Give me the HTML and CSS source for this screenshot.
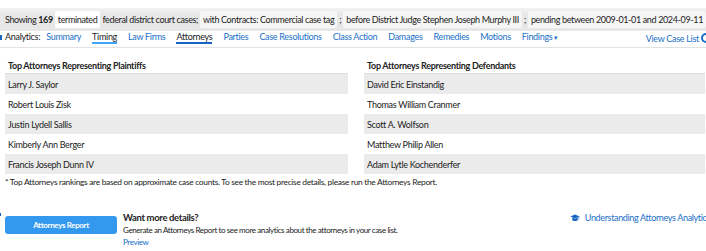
FILE: index.html
```html
<!DOCTYPE html>
<html>
<head>
  <title>Attorneys Analytics</title>
  <meta name="viewport" content="width=device-width, initial-scale=1.0">
  <link rel="stylesheet" href="styles.css">
</head>
<body>
  <div class="filters">
    <span>Showing <b>169</b></span>
    <span class="chip chip-white">terminated</span>
    <span>federal district court cases;</span>
    <span class="chip">with Contracts: Commercial case tag</span>
    <span>;</span>
    <span class="chip">before District Judge Stephen Joseph Murphy III</span>
    <span>;</span>
    <span class="chip">pending between 2009-01-01 and 2024-09-11</span>
    <span>.</span>
  </div>

  <div class="tabs">
    <span class="edge"></span>
    <span class="label">Analytics:</span>
    <a class="tab">Summary</a>
    <a class="tab current light">Timing</a>
    <a class="tab">Law Firms</a>
    <a class="tab current">Attorneys</a>
    <a class="tab">Parties</a>
    <a class="tab">Case Resolutions</a>
    <a class="tab">Class Action</a>
    <a class="tab">Damages</a>
    <a class="tab">Remedies</a>
    <a class="tab">Motions</a>
    <a class="tab">Findings <span class="caret">&#9662;</span></a>
    <a class="caselist">View Case List <span class="circle"></span></a>
  </div>

  <div class="tables">
    <table class="atty">
      <tr><th>Top Attorneys Representing Plaintiffs</th></tr>
      <tr><td>Larry J. Saylor</td></tr>
      <tr><td>Robert Louis Zisk</td></tr>
      <tr><td>Justin Lydell Sallis</td></tr>
      <tr><td>Kimberly Ann Berger</td></tr>
      <tr><td>Francis Joseph Dunn IV</td></tr>
    </table>
    <table class="atty">
      <tr><th>Top Attorneys Representing Defendants</th></tr>
      <tr><td>David Eric Einstandig</td></tr>
      <tr><td>Thomas William Cranmer</td></tr>
      <tr><td>Scott A. Wolfson</td></tr>
      <tr><td>Matthew Philip Allen</td></tr>
      <tr><td>Adam Lytle Kochenderfer</td></tr>
    </table>
  </div>

  <p class="note">* Top Attorneys rankings are based on approximate case counts. To see the most precise details, please run the Attorneys Report.</p>

  <div class="cta">
    <span class="edge-low"></span>
    <button class="report">Attorneys Report</button>
    <div class="more">
      <div class="more-title">Want more details?</div>
      <div>Generate an Attorneys Report to see more analytics about the attorneys in your case list.</div>
      <a class="preview">Preview</a>
    </div>
    <a class="help">
      <svg class="cap" width="10" height="8" viewBox="0 0 26 20">
        <path d="M13 1 L25 6 L13 11 L1 6 Z" fill="#1565c0"/>
        <path d="M6 9 L6 15 C6 18.5 20 18.5 20 15 L20 9 L13 12 Z" fill="#1565c0"/>
        <path d="M23 7 L23 14" stroke="#1565c0" stroke-width="1.6"/>
      </svg>
      Understanding Attorneys Analytics
    </a>
  </div>
</body>
</html>
```

FILE: styles.css
```css
body {
  margin: 0;
  font-family: Lato, "Open Sans", sans-serif;
  font-size: 9px;
  letter-spacing: -0.3px;
  color: #222;
  overflow: hidden;
}

.filters {
  margin-top: 8px;
  height: 23px;
  padding: 0 5px;
  display: flex;
  align-items: center;
  gap: 2px;
  white-space: nowrap;
  overflow: hidden;
  letter-spacing: -0.36px;
  background: linear-gradient(#f2f2f2, #e7e7e7 30%);
}

.chip {
  background-color: #f6f6f6;
  padding: 3px 3px;
  border-radius: 2px;
}

.chip-white {
  background-color: #fff;
}

.tabs {
  position: relative;
  display: flex;
  align-items: flex-start;
  height: 15px;
  padding: 1px 5px 0;
  border-bottom: 1px solid #e2e2e2;
  white-space: nowrap;
  line-height: 10px;
}

.edge {
  position: absolute;
  left: 0;
  top: 4px;
  width: 2px;
  height: 5px;
  background-color: #1565c0;
}

.label {
  margin-right: 6px;
}

.tab {
  color: #1a6fc9;
  margin-right: 11px;
  border-bottom: 2px solid transparent;
}

.tab.current {
  color: #222;
  border-bottom-color: #1565c0;
}

.tab.current.light {
  border-bottom-color: #42a5f5;
}

.caret {
  font-size: 7px;
}

.caselist {
  margin-left: auto;
  margin-top: 1px;
  margin-right: -10px;
  color: #1a6fc9;
}

.circle {
  display: inline-block;
  width: 6px;
  height: 6px;
  border: 2px solid #1a6fc9;
  border-radius: 50%;
  vertical-align: -1px;
}

.tables {
  display: grid;
  grid-template-columns: 343px 1fr;
  gap: 16px;
  padding: 9px 0 0 5px;
  margin-right: 1px;
}

.atty {
  width: 100%;
  border-collapse: collapse;
}

.atty th {
  text-align: left;
  font-weight: bold;
  height: 16px;
  padding: 0 3px;
  border-bottom: 1px solid #ddd;
}

.atty td {
  height: 20px;
  padding: 0 3px;
}

.atty tr:nth-child(even) td {
  background-color: #ebebeb;
}

.note {
  margin: 3px 0 0 5px;
  font-size: 8.4px;
  line-height: 11px;
}

.cta {
  position: relative;
  display: flex;
  align-items: flex-start;
  margin-top: 24px;
  padding-left: 5px;
  line-height: 12px;
}

.edge-low {
  position: absolute;
  left: 0;
  top: 1px;
  width: 1px;
  height: 3px;
  background-color: #1565c0;
}

.report {
  width: 112px;
  height: 18px;
  margin-top: 4px;
  background-color: #3399ee;
  color: #fff;
  font-family: Lato, sans-serif;
  font-size: 8px;
  letter-spacing: -0.35px;
  font-weight: bold;
  border: none;
  border-radius: 3px;
}

.more {
  margin-left: 6px;
  font-size: 8px;
  letter-spacing: -0.4px;
}

.more-title {
  font-size: 9.5px;
  letter-spacing: -0.35px;
  font-weight: bold;
}

.preview {
  color: #1a6fc9;
}

.help {
  display: flex;
  align-items: center;
  gap: 5px;
  margin-left: auto;
  margin-right: -4px;
  color: #1a6fc9;
  font-size: 9px;
  letter-spacing: -0.35px;
  white-space: nowrap;
}
```
